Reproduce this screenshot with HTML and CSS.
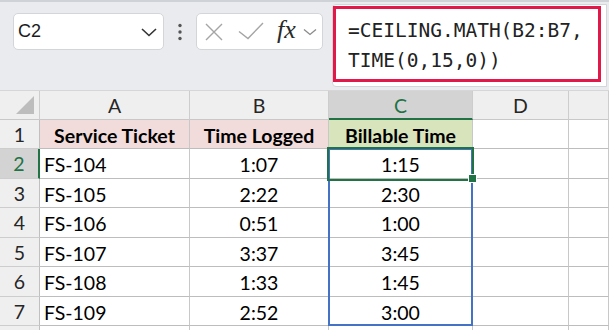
FILE: index.html
```html
<!DOCTYPE html>
<html lang="en">
<head>
    <meta charset="UTF-8">
    <title>CEILING.MATH</title>
    <link rel="stylesheet" href="styles.css">
</head>
<body>
<div class="toolbar">
    <div class="namebox">
        <span>C2</span>
        <svg width="16" height="10" viewBox="0 0 16 10"><path d="M1 2 L8 8.5 L15 2" fill="none" stroke="#333" stroke-width="1.6"/></svg>
    </div>
    <div class="dots">
        <svg width="6" height="18" viewBox="0 0 6 18"><circle cx="3" cy="2.5" r="1.7" fill="#555"/><circle cx="3" cy="9" r="1.7" fill="#555"/><circle cx="3" cy="15.5" r="1.7" fill="#555"/></svg>
    </div>
    <div class="fxbox">
        <svg class="cancel" width="18" height="18" viewBox="0 0 18 18"><path d="M1 1 L17 17 M17 1 L1 17" stroke="#a5a5a5" stroke-width="1.4"/></svg>
        <svg class="enter" width="26" height="18" viewBox="0 0 26 18"><path d="M1 9.5 L10 16.5 L25 1" fill="none" stroke="#a5a5a5" stroke-width="1.4"/></svg>
        <span class="fx">fx</span>
        <svg class="more" width="14" height="8" viewBox="0 0 14 8"><path d="M1 1.5 L7 6.5 L13 1.5" fill="none" stroke="#8a8a8a" stroke-width="1.3"/></svg>
    </div>
    <div class="formula">
        <div class="mark">=CEILING.MATH(B2:B7,<br>TIME(0,15,0))</div>
    </div>
</div>

<div class="sheet">
    <div class="hd corner"><i></i></div>
    <div class="hd">A</div>
    <div class="hd">B</div>
    <div class="hd sel">C</div>
    <div class="hd">D</div>
    <div class="hd"></div>

    <div class="rh">1</div>
    <div class="c title pink">Service Ticket</div>
    <div class="c title pink">Time Logged</div>
    <div class="c title green">Billable Time</div>
    <div class="c"></div>
    <div class="c"></div>

    <div class="rh sel">2</div>
    <div class="c left">FS-104</div>
    <div class="c">1:07</div>
    <div class="c">1:15</div>
    <div class="c"></div>
    <div class="c"></div>

    <div class="rh">3</div>
    <div class="c left">FS-105</div>
    <div class="c">2:22</div>
    <div class="c">2:30</div>
    <div class="c"></div>
    <div class="c"></div>

    <div class="rh">4</div>
    <div class="c left">FS-106</div>
    <div class="c">0:51</div>
    <div class="c">1:00</div>
    <div class="c"></div>
    <div class="c"></div>

    <div class="rh">5</div>
    <div class="c left">FS-107</div>
    <div class="c">3:37</div>
    <div class="c">3:45</div>
    <div class="c"></div>
    <div class="c"></div>

    <div class="rh">6</div>
    <div class="c left">FS-108</div>
    <div class="c">1:33</div>
    <div class="c">1:45</div>
    <div class="c"></div>
    <div class="c"></div>

    <div class="rh">7</div>
    <div class="c left">FS-109</div>
    <div class="c">2:52</div>
    <div class="c">3:00</div>
    <div class="c"></div>
    <div class="c"></div>

    <div class="rh"></div>
    <div class="c"></div>
    <div class="c"></div>
    <div class="c"></div>
    <div class="c"></div>
    <div class="c"></div>

    <!-- spill range + active cell -->
    <div class="spill"></div>
    <div class="active"></div>
    <div class="handle"></div>
</div>
</body>
</html>
```

FILE: styles.css
```css
* {
  box-sizing: border-box;
}
html, body {
  margin: 0;
  height: 330px;
  overflow: hidden;
  background: #fff;
}

/* formula bar */
.toolbar {
  height: 90px;
  background: #e9ebee;
  border-top: 2px solid #cfd2d6;
  display: flex;
  align-items: flex-start;
  padding-left: 13px;
}
.namebox {
  margin-top: 11px;
  width: 151px;
  height: 37px;
  background: #fff;
  border: 1px solid #d3d5d8;
  border-radius: 5px;
  display: flex;
  align-items: center;
  justify-content: space-between;
  padding: 0 6px 0 4px;
  font-family: "Liberation Sans", Arial, sans-serif;
  font-size: 18px;
  color: #1b1b1b;
}
.namebox svg {
  margin-top: 1px;
}
.dots {
  width: 32px;
  height: 37px;
  margin-top: 11px;
  display: flex;
  align-items: center;
  justify-content: center;
}
.fxbox {
  margin-top: 11px;
  width: 127px;
  height: 37px;
  background: #fff;
  border: 1px solid #d3d5d8;
  border-radius: 5px;
  display: flex;
  align-items: center;
  padding-left: 8px;
}
.fxbox .cancel {
  margin-right: 15px;
}
.fxbox .enter {
  margin-right: 13px;
  margin-top: -2px;
}
.fx {
  font-family: "Liberation Serif", "Times New Roman", serif;
  font-style: italic;
  font-size: 26px;
  line-height: 1;
  color: #2a2a2a;
  margin-top: -3px;
  margin-right: 7px;
}
.fxbox .more {
  margin-top: 1px;
}
.formula {
  margin-left: 9px;
  margin-top: 2px;
  width: 275px;
  height: 83px;
  background: #fff;
  border: 1px solid #d3d5d8;
  border-radius: 4px 0 0 4px;
}
.mark {
  margin-top: 1px;
  width: 268px;
  height: 76px;
  border: 3px solid #e2184b;
  padding: 7px 0 0 12px;
  font-family: "DejaVu Sans Mono", "Liberation Mono", monospace;
  font-size: 19.5px;
  line-height: 30px;
  color: #222;
  white-space: nowrap;
}

/* grid */
.sheet {
  position: relative;
  border-top: 1px solid #d6d6d6;
  display: grid;
  grid-template-columns: 40px 150px 139px 144px 96px 1fr;
  grid-template-rows: 29px 29px 30px 29px 30px 29px 30px 29px 20px;
  font-family: Lato, "Noto Sans", sans-serif;
  font-size: 19.5px;
  color: #000;
}
.hd, .rh, .c {
  border-right: 1px solid #c8c8c8;
  border-bottom: 1px solid #bdbdbd;
  display: flex;
  align-items: center;
  justify-content: center;
  white-space: nowrap;
  overflow: hidden;
}
.hd {
  background: #efefef;
  border-right-color: #cdcdcd;
  border-bottom-color: #c8c8c8;
  color: #262626;
  padding-top: 1px;
}
.rh {
  background: #efefef;
  border-bottom-color: #cdcdcd;
  border-right-color: #c0c0c0;
  color: #262626;
}
.hd.sel {
  background: #d3d3d3;
  color: #217346;
  border-bottom: 2px solid #217346;
  padding-top: 2px;
}
.rh.sel {
  background: #d3d3d3;
  color: #217346;
  border-right: 2px solid #217346;
}
.corner {
  position: relative;
}
.corner i {
  position: absolute;
  right: 5px;
  bottom: 5px;
  width: 0;
  height: 0;
  border-left: 18px solid transparent;
  border-bottom: 18px solid #bdbdbd;
}
.c {
  padding-top: 2px;
}
.c.left {
  justify-content: flex-start;
  padding-left: 4px;
}
.title {
  font-weight: bold;
}
.pink {
  background: #f2dcdb;
}
.green {
  background: #d8e4bc;
}

/* selection overlays */
.spill {
  position: absolute;
  left: 328px;
  top: 57px;
  width: 145px;
  height: 178px;
  border: 2px solid #4472c4;
}
.active {
  position: absolute;
  left: 327px;
  top: 56px;
  width: 147px;
  height: 34px;
  border: 2px solid #217346;
}
.handle {
  position: absolute;
  left: 468px;
  top: 83px;
  width: 9px;
  height: 9px;
  background: #217346;
  border: 1px solid #fff;
}
```
